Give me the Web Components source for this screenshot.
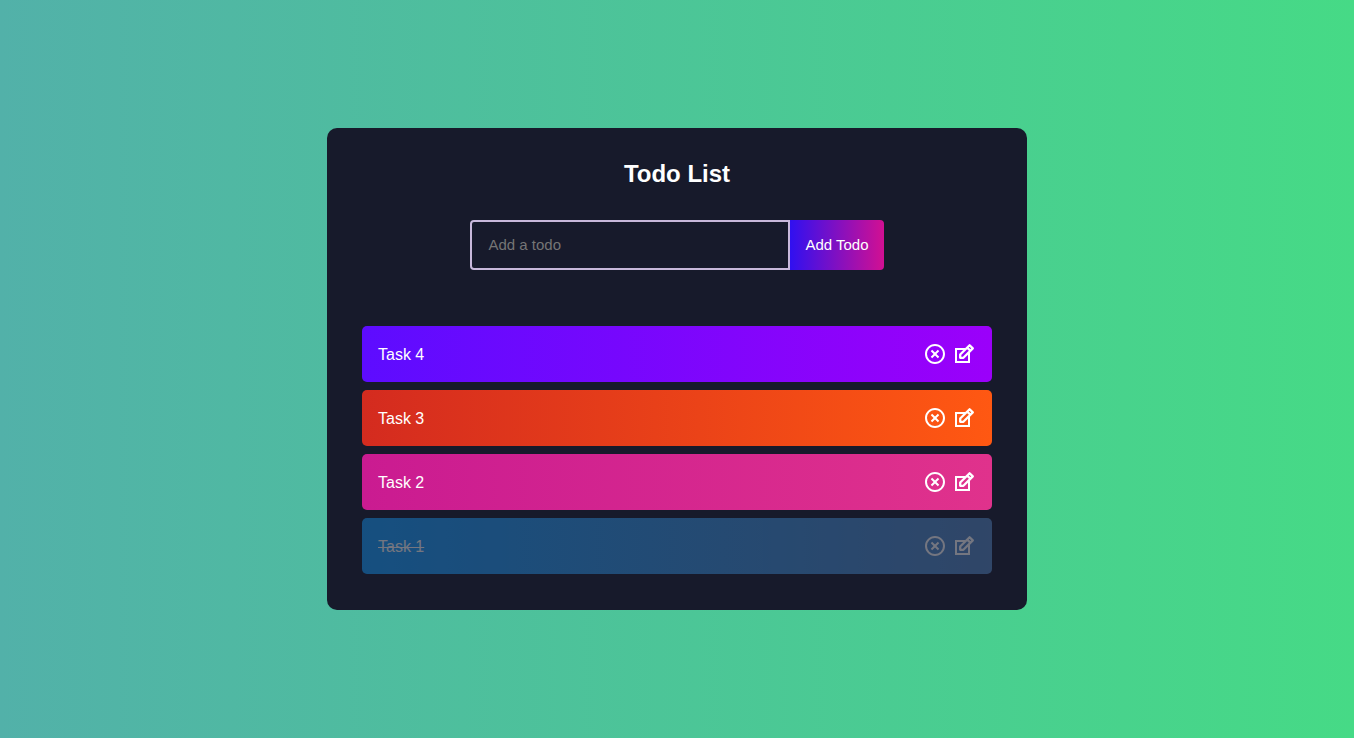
<!DOCTYPE html>
<html lang="en">
<head>
<meta charset="utf-8">
<meta name="viewport" content="width=device-width, initial-scale=1">
<title>Todo List</title>
<style>
  * { box-sizing: border-box; }
  body {
    margin: 0;
    min-height: 100vh;
    display: flex;
    align-items: center;
    justify-content: center;
    font-family: "Liberation Sans", Arial, sans-serif;
    background: linear-gradient(90deg, rgb(82, 177, 169), rgb(70, 218, 134));
  }
</style>
</head>
<body>
<todo-app heading="Todo List">
  <todo-form slot="form"></todo-form>
  <todo-item style="--from: rgb(93, 12, 255); --to: rgb(155, 0, 250)">Task 4</todo-item>
  <todo-item style="--from: rgb(212, 43, 31); --to: rgb(255, 88, 18)">Task 3</todo-item>
  <todo-item style="--from: rgb(202, 27, 145); --to: rgb(224, 50, 140)">Task 2</todo-item>
  <todo-item complete style="--from: rgb(20, 159, 255); --to: rgb(86, 136, 195)">Task 1</todo-item>
</todo-app>

<script>
class TodoApp extends HTMLElement {
  constructor() {
    super();
    this.attachShadow({ mode: "open" }).innerHTML = `
      <style>
        * { box-sizing: border-box; }
        :host {
          box-sizing: border-box;
          display: block;
          width: 100%;
          max-width: 700px;
          padding: 32px 5% 36px;
          border-radius: 10px;
          background: #171a2b;
          color: #fff;
        }
        @media (min-width: 700px) { :host { padding: 32px 35px 36px; } }
        h1 { margin: 0 0 32px; font-size: 24px; line-height: 28px; text-align: center; }
        ul { list-style: none; margin: 56px 0 0; padding: 0; display: grid; gap: 8px; }
      </style>
      <main>
        <h1></h1>
        <slot name="form"></slot>
        <ul role="list"><slot></slot></ul>
      </main>`;
  }
  connectedCallback() {
    this.shadowRoot.querySelector("h1").textContent = this.getAttribute("heading");
  }
}

class TodoForm extends HTMLElement {
  constructor() {
    super();
    this.attachShadow({ mode: "open" }).innerHTML = `
      <style>
        :host { display: block; }
        form { display: flex; justify-content: center; }
        input, button { box-sizing: border-box; height: 50px; margin: 0; font: inherit; font-size: 15px; line-height: 16px; outline: none; }
        input {
          flex: 0 1 320px;
          min-width: 0;
          padding: 14px 16px 16px;
          border: 2px solid #c8b8db;
          border-radius: 4px 0 0 4px;
          background: transparent;
          color: #fff;
        }
        input::placeholder { color: #757575; }
        button {
          padding: 0 15px;
          border: 0;
          border-radius: 0 4px 4px 0;
          background: linear-gradient(90deg, rgb(48, 16, 240), rgb(210, 16, 146));
          color: #fff;
          white-space: nowrap;
          cursor: pointer;
        }
      </style>
      <form>
        <input type="text" name="todo" placeholder="Add a todo" aria-label="Add a todo">
        <button type="submit">Add Todo</button>
      </form>`;
    this.shadowRoot.querySelector("form").addEventListener("submit", (e) => {
      e.preventDefault();
      const input = this.shadowRoot.querySelector("input");
      const text = input.value.trim();
      if (!text) return;
      const item = document.createElement("todo-item");
      item.textContent = text;
      this.after(item);
      input.value = "";
    });
  }
}

class TodoItem extends HTMLElement {
  constructor() {
    super();
    this.attachShadow({ mode: "open" }).innerHTML = `
      <style>
        :host {
          box-sizing: border-box;
          display: flex;
          align-items: center;
          justify-content: space-between;
          min-height: 56px;
          padding: 16px;
          border-radius: 5px;
          font-size: 16px;
          line-height: 19px;
          color: #fff;
          background: linear-gradient(90deg, var(--from, rgb(93, 12, 255)), var(--to, rgb(155, 0, 250)));
        }
        :host([complete]) { text-decoration: line-through; opacity: 0.4; }
        .text { flex: 1; cursor: pointer; }
        .icons { display: flex; gap: 5px; }
        button { display: block; padding: 0; border: 0; background: none; color: inherit; cursor: pointer; }
        svg { display: block; width: 24px; height: 24px; fill: currentColor; }
        .edit svg { fill: none; stroke: currentColor; stroke-width: 2; }
      </style>
      <div class="text"><slot></slot></div>
      <div class="icons">
        <button type="button" class="remove" aria-label="Delete">
          <svg viewBox="0 0 24 24" aria-hidden="true"><path d="M12 22C6.477 22 2 17.523 2 12S6.477 2 12 2s10 4.477 10 10-4.477 10-10 10zm0-2a8 8 0 1 0 0-16 8 8 0 0 0 0 16zm0-9.414l2.828-2.829 1.415 1.415L13.414 12l2.829 2.828-1.415 1.415L12 13.414l-2.828 2.829-1.415-1.415L10.586 12 7.757 9.172l1.415-1.415L12 10.586z"/></svg>
        </button>
        <button type="button" class="edit" aria-label="Edit">
          <svg viewBox="0 0 24 24" aria-hidden="true"><path d="M13 7H4v13h13v-9"/><path d="M8.2 15.8v-3.3l9.4-9.3 3.2 3.2L11.4 15.8zM15.2 5.6l3.2 3.2" stroke-width="2.3" stroke-linejoin="round"/></svg>
        </button>
      </div>`;
    this.shadowRoot.querySelector(".text").addEventListener("click", () => this.toggleAttribute("complete"));
    this.shadowRoot.querySelector(".remove").addEventListener("click", () => this.remove());
  }
  connectedCallback() { this.setAttribute("role", "listitem"); }
}

customElements.define("todo-app", TodoApp);
customElements.define("todo-form", TodoForm);
customElements.define("todo-item", TodoItem);
</script>
</body>
</html>
